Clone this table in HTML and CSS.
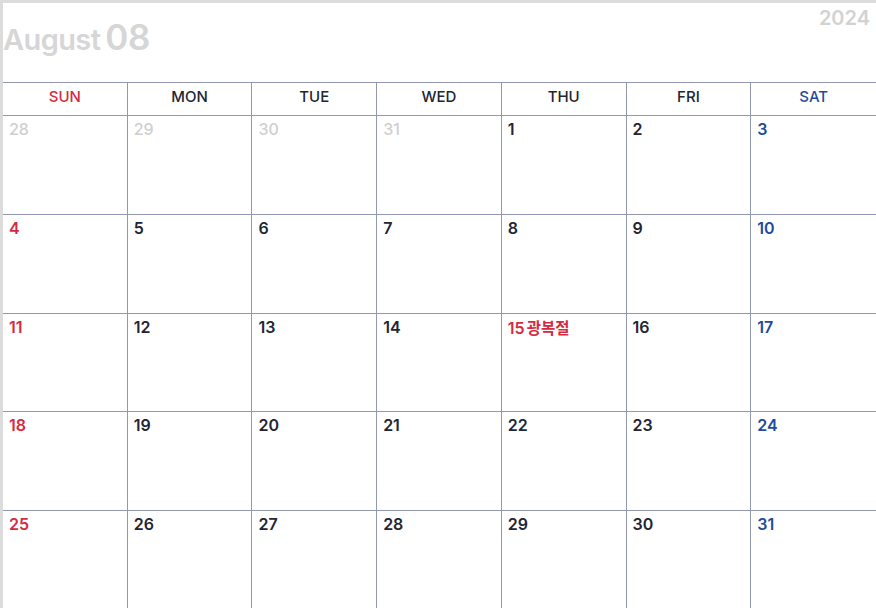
FILE: index.html
```html
<!DOCTYPE html>
<html lang="ko">
<head>
<meta charset="utf-8">
<title>August 2024</title>
<link rel="stylesheet" href="styles.css">
</head>
<body>
<div class="frame">
  <header class="top">
    <h1 class="title"><span class="month">August</span><span class="num">08</span></h1>
    <div class="year">2024</div>
  </header>
  <div class="grid">
    <div class="head sun">SUN</div>
    <div class="head">MON</div>
    <div class="head">TUE</div>
    <div class="head">WED</div>
    <div class="head">THU</div>
    <div class="head">FRI</div>
    <div class="head sat">SAT</div>

    <div class="cell other">28</div>
    <div class="cell other">29</div>
    <div class="cell other">30</div>
    <div class="cell other">31</div>
    <div class="cell">1</div>
    <div class="cell">2</div>
    <div class="cell sat">3</div>

    <div class="cell sun">4</div>
    <div class="cell">5</div>
    <div class="cell">6</div>
    <div class="cell">7</div>
    <div class="cell">8</div>
    <div class="cell">9</div>
    <div class="cell sat">10</div>

    <div class="cell sun">11</div>
    <div class="cell">12</div>
    <div class="cell">13</div>
    <div class="cell">14</div>
    <div class="cell sun">15<span class="holiday">광복절</span></div>
    <div class="cell">16</div>
    <div class="cell sat">17</div>

    <div class="cell sun">18</div>
    <div class="cell">19</div>
    <div class="cell">20</div>
    <div class="cell">21</div>
    <div class="cell">22</div>
    <div class="cell">23</div>
    <div class="cell sat">24</div>

    <div class="cell sun">25</div>
    <div class="cell">26</div>
    <div class="cell">27</div>
    <div class="cell">28</div>
    <div class="cell">29</div>
    <div class="cell">30</div>
    <div class="cell sat">31</div>
  </div>
</div>
</body>
</html>
```
FILE: styles.css
```css
html, body {
  margin: 0;
  padding: 0;
  background: #ffffff;
  overflow: hidden;
}
body {
  font-family: Inter, "Noto Sans CJK KR", sans-serif;
  color: #222533;
}
.frame {
  width: 873px;
  height: 605px;
  border-top: 3px solid #dcdcdc;
  border-left: 3px solid #dcdcdc;
  overflow: hidden;
}
.top {
  height: 79px;
  display: flex;
  justify-content: space-between;
  align-items: flex-start;
}
.title {
  margin: 13px 0 0 0;
  display: flex;
  align-items: baseline;
  gap: 5px;
  color: #d6d6d6;
  font-weight: 600;
}
.month {
  font-size: 29px;
  letter-spacing: -0.6px;
}
.num {
  font-size: 35px;
  letter-spacing: -0.5px;
}
.year {
  margin: 3px 6px 0 0;
  font-size: 20px;
  font-weight: 600;
  color: #d2d2d2;
}
.grid {
  display: grid;
  grid-template-columns: repeat(7, 1fr);
  grid-template-rows: 33px repeat(5, 98.75px);
  border-top: 1px solid #9298b4;
}
.head, .cell {
  border-right: 1px solid #9298b4;
  border-bottom: 1px solid #9298b4;
}
.grid > :nth-child(7n) {
  border-right: none;
}
.head {
  display: flex;
  align-items: center;
  justify-content: center;
  padding-bottom: 5px;
  font-size: 15px;
  font-weight: 500;
  color: #222533;
}
.cell {
  padding: 3px 6px;
  font-size: 16px;
  font-weight: 600;
  line-height: 20px;
}
.sun { color: #d42a42; }
.sat { color: #1f4a9c; }
.other { color: #cfcfcf; font-weight: 500; }
.holiday {
  margin-left: 2px;
  font-size: 15.5px;
  font-weight: 700;
  font-family: "Noto Sans CJK KR", sans-serif;
}
```
